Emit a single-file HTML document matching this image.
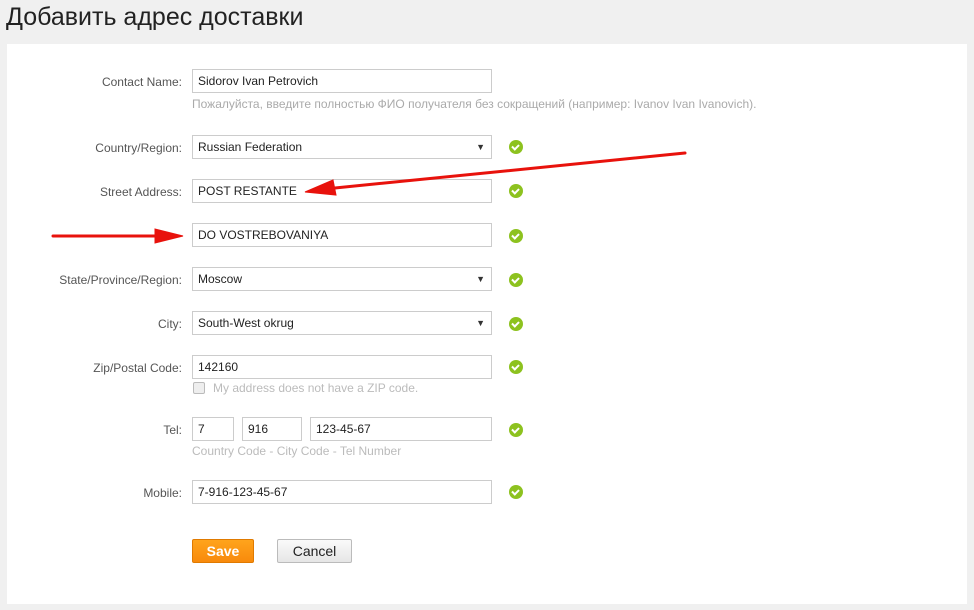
<!DOCTYPE html>
<html><head><meta charset="utf-8"><style>
body{margin:0;width:974px;height:610px;background:#f0f0f0;font-family:"Liberation Sans",sans-serif;position:relative;overflow:hidden}
h1{position:absolute;left:6px;top:1px;margin:0;font-weight:normal;font-size:25px;color:#222;line-height:32px}
.panel{position:absolute;left:7px;top:44px;width:960px;height:560px;background:#fff}
.l{position:absolute;right:792px;font-size:12px;color:#555;text-align:right;white-space:nowrap}
.i{position:absolute;border:1px solid #ccc;font-size:12px;color:#222;line-height:23px;padding-left:5px;box-sizing:border-box;height:24px}
.sel:after{content:"▼";position:absolute;right:6px;top:0;font-size:9px;color:#333}
.h{position:absolute;left:192px;font-size:12px;color:#aaa;white-space:nowrap}
.ok{position:absolute;left:509px;width:14px;height:14px;border-radius:50%;background:#8dc21f}
.ok:after{content:"";position:absolute;left:4px;top:3px;width:3px;height:5px;border:solid #fff;border-width:0 2px 2px 0;transform:rotate(45deg)}
.btn{position:absolute;top:539px;height:24px;font-size:14px;text-align:center;line-height:23px;box-sizing:border-box;border-radius:2px}
</style></head><body>
<h1>Добавить адрес доставки</h1>
<div class="panel"></div>
<div class="l" style="top:75px">Contact Name:</div>
<div class="i" style="left:192px;top:69px;width:300px">Sidorov Ivan Petrovich</div>
<div class="h" style="top:97px">Пожалуйста, введите полностью ФИО получателя без сокращений (например: Ivanov Ivan Ivanovich).</div>
<div class="l" style="top:141px">Country/Region:</div>
<div class="i sel" style="left:192px;top:135px;width:300px">Russian Federation</div><div class="ok" style="top:140px"></div>
<div class="l" style="top:185px">Street Address:</div>
<div class="i" style="left:192px;top:179px;width:300px">POST RESTANTE</div><div class="ok" style="top:184px"></div>
<div class="i" style="left:192px;top:223px;width:300px">DO VOSTREBOVANIYA</div><div class="ok" style="top:229px"></div>
<div class="l" style="top:273px">State/Province/Region:</div>
<div class="i sel" style="left:192px;top:267px;width:300px">Moscow</div><div class="ok" style="top:273px"></div>
<div class="l" style="top:317px">City:</div>
<div class="i sel" style="left:192px;top:311px;width:300px">South-West okrug</div><div class="ok" style="top:317px"></div>
<div class="l" style="top:361px">Zip/Postal Code:</div>
<div class="i" style="left:192px;top:355px;width:300px">142160</div><div class="ok" style="top:360px"></div>
<div style="position:absolute;left:193px;top:382px;width:10px;height:10px;border:1px solid #bbb;border-radius:2px;background:#eee"></div>
<div class="h" style="left:213px;top:381px;color:#bbb">My address does not have a ZIP code.</div>
<div class="l" style="top:423px">Tel:</div>
<div class="i" style="left:192px;top:417px;width:42px">7</div>
<div class="i" style="left:242px;top:417px;width:60px">916</div>
<div class="i" style="left:310px;top:417px;width:182px">123-45-67</div><div class="ok" style="top:423px"></div>
<div class="h" style="top:444px;color:#bbb">Country Code - City Code - Tel Number</div>
<div class="l" style="top:486px">Mobile:</div>
<div class="i" style="left:192px;top:480px;width:300px">7-916-123-45-67</div><div class="ok" style="top:485px"></div>
<div class="btn" style="left:192px;width:62px;background:linear-gradient(#ffa41c,#f88a0c);border:1px solid #e07a00;color:#fff;font-weight:bold">Save</div>
<div class="btn" style="left:277px;width:75px;background:linear-gradient(#fafafa,#e6e6e6);border:1px solid #bbb;color:#222">Cancel</div>
<svg width="974" height="610" style="position:absolute;left:0;top:0">
<g fill="#e8120c" stroke="#e8120c" stroke-linecap="round">
<line x1="685" y1="153" x2="325" y2="189" stroke-width="3"/>
<polygon points="305,192 333,180 336,195"/>
<line x1="53" y1="236" x2="160" y2="236" stroke-width="3"/>
<polygon points="183,236 155,229 155,243"/>
</g></svg>
</body></html>
